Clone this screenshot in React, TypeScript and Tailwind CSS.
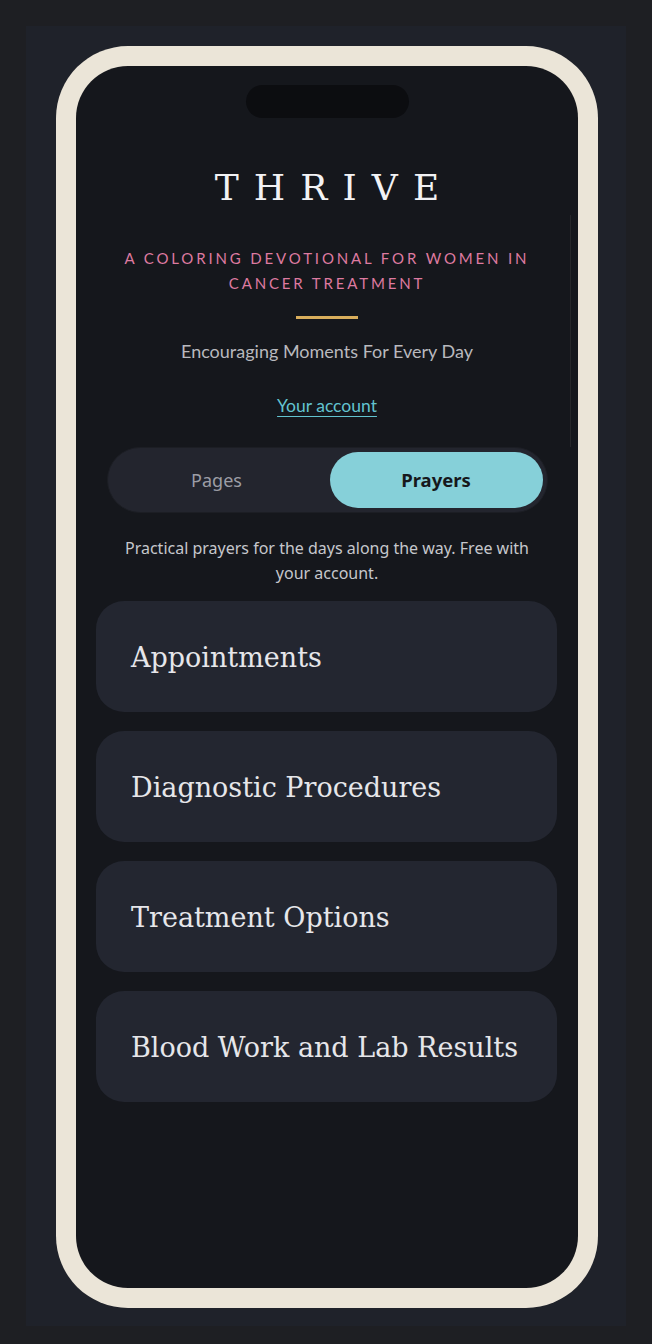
import React from "react";

const cards = [
  "Appointments",
  "Diagnostic Procedures",
  "Treatment Options",
  "Blood Work and Lab Results",
];

export default function App() {
  return (
    <div className="min-h-screen w-full bg-[#1e1f23] p-[26px]">
      <div className="h-[1300px] w-[600px] bg-[#1f222a] pl-[30px] pt-[20px]">
        <div className="h-[1262px] w-[542px] rounded-[72px] bg-[#ebe5d8] p-[20px]">
          <div className="relative flex h-[1222px] w-[502px] flex-col items-center overflow-hidden rounded-[52px] bg-[#15171c]">
            <div className="mt-[19px] h-[33px] w-[163px] rounded-full bg-[#0c0d10]" />
            <div className="absolute right-[7px] top-[149px] h-[232px] w-px bg-[#26272a]" />
            <h1
              className="mt-[46px] pl-[15px] text-[36px] font-medium leading-[48px] tracking-[0.42em] text-[#f2f2f4]"
              style={{ fontFamily: '"DejaVu Serif", serif' }}
            >
              THRIVE
            </h1>
            <p
              className="mt-[34px] w-[440px] text-center text-[15px] leading-[25px] tracking-[0.19em] text-[#de7aa0]"
              style={{ fontFamily: 'Lato, "Noto Sans", sans-serif' }}
            >
              A COLORING DEVOTIONAL FOR WOMEN IN CANCER TREATMENT
            </p>
            <div className="mt-[20px] h-[3px] w-[62px] bg-[#d9ae5c]" />
            <p
              className="mt-[20px] text-[18px] leading-[24px] text-[#b9b9be]"
              style={{ fontFamily: 'Lato, "Noto Sans", sans-serif' }}
            >
              Encouraging Moments For Every Day
            </p>
            <a
              className="mt-[31px] text-[17.5px] leading-[24px] text-[#62c3cf] underline decoration-1 underline-offset-[4px]"
              style={{ fontFamily: 'Lato, "Noto Sans", sans-serif' }}
            >
              Your account
            </a>
            <div
              className="mt-[29px] flex h-[66px] w-[441px] items-center rounded-full border border-[#1c1e24] bg-[#23252e] p-[4px]"
              style={{ fontFamily: '"Noto Sans", sans-serif' }}
            >
              <div className="flex h-full flex-1 items-center justify-center pr-[8px] text-[18px] text-[#9c9da5]">
                Pages
              </div>
              <div className="flex h-[56px] w-[213px] items-center justify-center rounded-full bg-[#86d0d9] text-[18.5px] font-bold text-[#16181c]">
                Prayers
              </div>
            </div>
            <p
              className="mt-[23px] w-[420px] text-center text-[16px] leading-[25px] text-[#c6c7cc]"
              style={{ fontFamily: '"Noto Sans", sans-serif' }}
            >
              Practical prayers for the days along the way. Free with your account.
            </p>
            <div className="mt-[15px] ml-[20px] flex w-[461px] flex-col gap-[19px] self-start">
              {cards.map((c) => (
                <div
                  key={c}
                  className="flex h-[111px] items-center whitespace-nowrap rounded-[28px] bg-[#232630] pl-[35px] pt-[3px] text-[27px] text-[#e6e6ea]"
                  style={{ fontFamily: '"DejaVu Serif", serif' }}
                >
                  {c}
                </div>
              ))}
            </div>
          </div>
        </div>
      </div>
    </div>
  );
}
